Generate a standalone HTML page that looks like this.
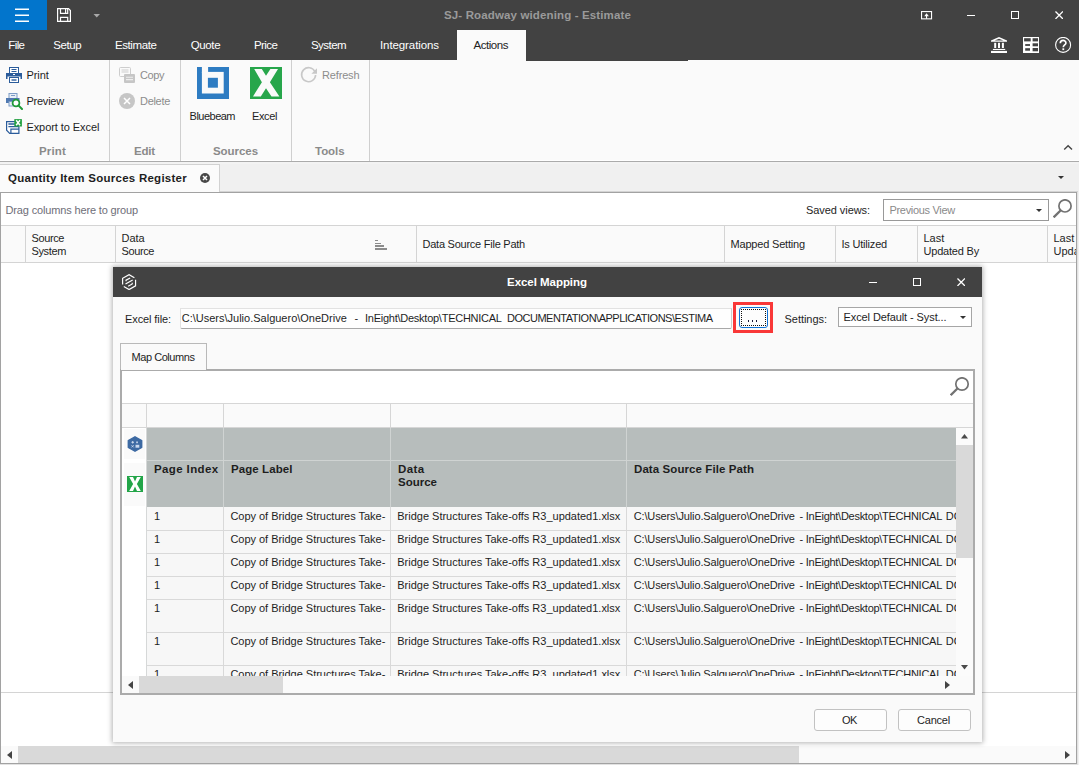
<!DOCTYPE html>
<html><head><meta charset="utf-8"><title>Estimate</title>
<style>
html,body{margin:0;padding:0;}
body{width:1079px;height:765px;overflow:hidden;position:relative;background:#f0f0f0;font-family:"Liberation Sans",sans-serif;}
.b{position:absolute;display:block;}
.t{position:absolute;white-space:pre;line-height:14px;font-family:"Liberation Sans",sans-serif;}
</style></head><body>
<div class="b" style="left:0px;top:0px;width:1079px;height:765px;background:#f0f0f0"></div>
<div class="b" style="left:0px;top:0px;width:1079px;height:60px;background:#424242"></div>
<div class="b" style="left:526px;top:60px;width:162px;height:1px;background:#424242"></div>
<div class="b" style="left:0px;top:0px;width:47px;height:30px;background:#0275cc"></div>
<svg class="b" style="left:15px;top:8px" width="14" height="14" viewBox="0 0 14 14"><path d="M0 1.25h14M0 7.25h14M0 13.25h14" stroke="#fff" stroke-width="1.3" fill="none"/></svg>
<svg class="b" style="left:57px;top:8px" width="14" height="14" viewBox="0 0 14 14"><path d="M0.6 0.6H11.5L13.4 2.5V13.4H0.6Z" stroke="#fff" stroke-width="1.2" fill="none"/><path d="M3.5 0.6V5.4H10.7V0.6M8.6 0.8V5.2M3.5 13.4V9.4H10.7V13.4" stroke="#fff" stroke-width="1.2" fill="none"/></svg>
<svg class="b" style="left:93px;top:14px" width="8" height="4" viewBox="0 0 8 4"><path d="M0.5 0h6.5l-3.25 3.5z" fill="#a8a8a8"/></svg>
<span class="t" style="left:444px;top:8px;font-size:11.5px;font-weight:700;color:#9a9a9a;letter-spacing:0.137px;">SJ- Roadway widening - Estimate</span>
<svg class="b" style="left:921px;top:10.6px" width="12" height="9" viewBox="0 0 12 9"><rect x="0.55" y="0.55" width="10" height="7.3" stroke="#fff" stroke-width="1.1" fill="none"/><path d="M5.55 2.3L7.9 5.2H6.1V7.8H5V5.2H3.2Z" fill="#fff"/></svg>
<div class="b" style="left:967px;top:15px;width:8px;height:1.3px;background:#fff"></div>
<div class="b" style="left:1011px;top:11px;width:8px;height:8px;border:1.3px solid #fff;box-sizing:border-box"></div>
<svg class="b" style="left:1055px;top:11px" width="8.4" height="8.4" viewBox="0 0 9 9"><path d="M0.5 0.5l8 8M8.5 0.5l-8 8" stroke="#fff" stroke-width="1.4"/></svg>
<svg class="b" style="left:991px;top:37px" width="16" height="16" viewBox="0 0 16 16"><path d="M8 0L16 3.6V4.8H0V3.6Z" fill="#fff"/><path d="M8 1.7L12.3 3.6H3.7Z" fill="#424242"/><rect x="3.2" y="5.8" width="2" height="5.2" fill="#fff"/><rect x="7" y="5.8" width="2" height="5.2" fill="#fff"/><rect x="10.9" y="5.8" width="2" height="5.2" fill="#fff"/><rect x="1.9" y="11.9" width="12.3" height="1.1" fill="#fff"/><rect x="0" y="13.9" width="16" height="2.1" fill="#fff"/></svg>
<svg class="b" style="left:1023px;top:37px" width="16" height="16" viewBox="0 0 16 16"><rect width="16" height="16" fill="#fff"/><rect x="1.1" y="1.2" width="6.6" height="3.2" fill="#424242"/><rect x="9.6" y="1.2" width="5.4" height="3.2" fill="#424242"/><rect x="2.2" y="7.1" width="4.8" height="1.8" fill="#424242"/><rect x="9.6" y="6.3" width="5.4" height="3" fill="#424242"/><rect x="2.2" y="11.2" width="4.8" height="2.5" fill="#424242"/><rect x="9.6" y="11" width="5.4" height="3.3" fill="#424242"/></svg>
<svg class="b" style="left:1055px;top:37px" width="17" height="17" viewBox="0 0 17 17"><circle cx="8.1" cy="7.9" r="7.5" fill="none" stroke="#fff" stroke-width="1.1"/><path d="M5.3 6.2c0-3.6 5.6-3.6 5.6-0.3c0 2-2.6 2.1-2.6 4.3" fill="none" stroke="#fff" stroke-width="1.7"/><rect x="7.4" y="11.3" width="1.8" height="1.8" fill="#fff"/></svg>
<div class="b" style="left:457px;top:30px;width:69px;height:31px;background:#fafafa"></div>
<span class="t" style="left:8.25px;top:38px;font-size:11.5px;font-weight:400;color:#fff;letter-spacing:-0.600px;">File</span>
<span class="t" style="left:53.3px;top:38px;font-size:11.5px;font-weight:400;color:#fff;letter-spacing:-0.412px;">Setup</span>
<span class="t" style="left:115px;top:38px;font-size:11.5px;font-weight:400;color:#fff;letter-spacing:-0.419px;">Estimate</span>
<span class="t" style="left:190.7px;top:38px;font-size:11.5px;font-weight:400;color:#fff;letter-spacing:-0.366px;">Quote</span>
<span class="t" style="left:254px;top:38px;font-size:11.5px;font-weight:400;color:#fff;letter-spacing:-0.600px;">Price</span>
<span class="t" style="left:311px;top:38px;font-size:11.5px;font-weight:400;color:#fff;letter-spacing:-0.557px;">System</span>
<span class="t" style="left:380px;top:38px;font-size:11.5px;font-weight:400;color:#fff;letter-spacing:-0.092px;">Integrations</span>
<span class="t" style="left:473.5px;top:38px;font-size:11.5px;font-weight:400;color:#222;letter-spacing:-0.460px;">Actions</span>
<div class="b" style="left:0px;top:61px;width:1079px;height:100px;background:#fafafa"></div>
<div class="b" style="left:0px;top:60px;width:526px;height:1px;background:#fafafa"></div>
<div class="b" style="left:688px;top:60px;width:391px;height:1px;background:#fafafa"></div>
<div class="b" style="left:0px;top:160px;width:1079px;height:1px;background:#fff"></div>
<div class="b" style="left:0px;top:161px;width:1079px;height:1px;background:#ababab"></div>
<div class="b" style="left:0px;top:162px;width:1079px;height:2px;background:#f3f3f3"></div>
<div class="b" style="left:109px;top:60px;width:1px;height:101px;background:#cfcfcf"></div>
<div class="b" style="left:180px;top:60px;width:1px;height:101px;background:#cfcfcf"></div>
<div class="b" style="left:291px;top:60px;width:1px;height:101px;background:#cfcfcf"></div>
<div class="b" style="left:369px;top:60px;width:1px;height:101px;background:#cfcfcf"></div>
<span class="t" style="left:26.4px;top:67.5px;font-size:11px;font-weight:400;color:#1e1e1e;letter-spacing:-0.045px;">Print</span>
<span class="t" style="left:26.4px;top:93.5px;font-size:11px;font-weight:400;color:#1e1e1e;letter-spacing:-0.218px;">Preview</span>
<span class="t" style="left:26.4px;top:119.5px;font-size:11px;font-weight:400;color:#1e1e1e;letter-spacing:-0.066px;">Export to Excel</span>
<span class="t" style="left:140px;top:67.5px;font-size:11px;font-weight:400;color:#8c8c8c;letter-spacing:-0.422px;">Copy</span>
<span class="t" style="left:140px;top:93.5px;font-size:11px;font-weight:400;color:#8c8c8c;letter-spacing:-0.299px;">Delete</span>
<span class="t" style="left:189.6px;top:108.7px;font-size:11px;font-weight:400;color:#1e1e1e;letter-spacing:-0.518px;">Bluebeam</span>
<span class="t" style="left:252px;top:108.7px;font-size:11px;font-weight:400;color:#1e1e1e;letter-spacing:-0.381px;">Excel</span>
<span class="t" style="left:322px;top:67.5px;font-size:11px;font-weight:400;color:#8c8c8c;letter-spacing:-0.162px;">Refresh</span>
<span class="t" style="left:39px;top:143.5px;font-size:11.5px;font-weight:700;color:#8a8a8a;letter-spacing:0.159px;">Print</span>
<span class="t" style="left:134px;top:143.5px;font-size:11.5px;font-weight:700;color:#8a8a8a;letter-spacing:-0.184px;">Edit</span>
<span class="t" style="left:213px;top:143.5px;font-size:11.5px;font-weight:700;color:#8a8a8a;letter-spacing:-0.056px;">Sources</span>
<span class="t" style="left:315px;top:143.5px;font-size:11.5px;font-weight:700;color:#8a8a8a;letter-spacing:-0.042px;">Tools</span>
<svg class="b" style="left:197px;top:67px" width="32" height="32" viewBox="0 0 32 32"><rect width="32" height="32" fill="#2e7cc2"/><rect x="4.9" y="4.9" width="21.8" height="21.6" fill="#fafafa"/><rect x="4.9" y="0" width="6.2" height="6" fill="#fafafa"/><rect x="10.9" y="10.8" width="10" height="9.9" fill="#2e7cc2"/></svg>
<svg class="b" style="left:250px;top:67px" width="32" height="32" viewBox="0 0 32 32"><rect width="32" height="32" fill="#27a64b"/><path d="M4.2 1.9L11.8 1.9L16 8.8L20.4 1.9L28 1.9L19.9 15.2L29.4 29.4L21.5 29.4L16 21.3L10.8 29.4L3 29.4L11.9 15.2Z" fill="#fafafa"/></svg>
<svg class="b" style="left:1063px;top:144px" width="10" height="7" viewBox="0 0 10 7"><path d="M1.2 5.6l3.9-3.9l3.9 3.9" stroke="#444" stroke-width="1.35" fill="none"/></svg>
<div class="b" style="left:0px;top:164px;width:220px;height:29px;background:#fbfbfb;border:1px solid #d2d2d2;border-bottom:none;border-left:none;box-sizing:border-box"></div>
<span class="t" style="left:8px;top:171px;font-size:11.5px;font-weight:700;color:#1e1e1e;letter-spacing:0.257px;">Quantity Item Sources Register</span>
<svg class="b" style="left:200px;top:173px" width="10" height="10" viewBox="0 0 10 10"><circle cx="5" cy="5" r="5" fill="#484848"/><path d="M3 3l4 4M7 3l-4 4" stroke="#fff" stroke-width="1.5"/></svg>
<svg class="b" style="left:1057.7px;top:176px" width="6" height="3" viewBox="0 0 6 3"><path d="M0 0h6l-3 3z" fill="#333"/></svg>
<div class="b" style="left:220px;top:191px;width:858px;height:1px;background:#d4d4d4"></div>
<div class="b" style="left:1077px;top:192px;width:1px;height:573px;background:#e2e2e2"></div>
<div class="b" style="left:0px;top:764px;width:1078px;height:1px;background:#e2e2e2"></div>
<div class="b" style="left:0px;top:192px;width:1077px;height:572px;background:#fff;border:1px solid #a2a2a2;box-sizing:border-box"></div>
<span class="t" style="left:5.5px;top:202.8px;font-size:11px;font-weight:400;color:#6e6e78;letter-spacing:-0.148px;">Drag columns here to group</span>
<span class="t" style="left:806px;top:202.8px;font-size:11px;font-weight:400;color:#1e1e1e;letter-spacing:-0.068px;">Saved views:</span>
<div class="b" style="left:883px;top:199px;width:166px;height:22px;background:#fff;border:1px solid #999;box-sizing:border-box"></div>
<span class="t" style="left:889.5px;top:202.8px;font-size:11px;font-weight:400;color:#8a8a8a;letter-spacing:-0.323px;">Previous View</span>
<svg class="b" style="left:1035.7px;top:208.6px" width="6" height="3" viewBox="0 0 6 3"><path d="M0 0h6l-3 3z" fill="#333"/></svg>
<svg class="b" style="left:1053px;top:199px" width="19" height="19" viewBox="0 0 19 19"><circle cx="12" cy="6.9" r="6.1" fill="none" stroke="#727272" stroke-width="1.7"/><path d="M7.8 11.2l-7.2 7.2" stroke="#727272" stroke-width="2.3"/></svg>
<div class="b" style="left:1px;top:225px;width:1075px;height:38px;background:#fafafa;border-top:1px solid #d4d4d4;border-bottom:1px solid #d4d4d4;box-sizing:border-box"></div>
<div class="b" style="left:25px;top:226px;width:1px;height:36px;background:#d4d4d4"></div>
<div class="b" style="left:115px;top:226px;width:1px;height:36px;background:#d4d4d4"></div>
<div class="b" style="left:416px;top:226px;width:1px;height:36px;background:#d4d4d4"></div>
<div class="b" style="left:724px;top:226px;width:1px;height:36px;background:#d4d4d4"></div>
<div class="b" style="left:835px;top:226px;width:1px;height:36px;background:#d4d4d4"></div>
<div class="b" style="left:917px;top:226px;width:1px;height:36px;background:#d4d4d4"></div>
<div class="b" style="left:1047px;top:226px;width:1px;height:36px;background:#d4d4d4"></div>
<span class="t" style="left:31.5px;top:231px;font-size:11px;font-weight:400;color:#1e1e1e;letter-spacing:-0.393px;">Source</span>
<span class="t" style="left:31.5px;top:244px;font-size:11px;font-weight:400;color:#1e1e1e;letter-spacing:-0.365px;">System</span>
<span class="t" style="left:121.5px;top:231px;font-size:11px;font-weight:400;color:#1e1e1e;">Data</span>
<span class="t" style="left:121.5px;top:244px;font-size:11px;font-weight:400;color:#1e1e1e;letter-spacing:-0.393px;">Source</span>
<div class="b" style="left:375px;top:240px;width:3px;height:1px;background:#8c8c8c"></div>
<div class="b" style="left:375px;top:243px;width:6px;height:1px;background:#8c8c8c"></div>
<div class="b" style="left:375px;top:245px;width:9px;height:1.7px;background:#8c8c8c"></div>
<div class="b" style="left:375px;top:248px;width:12px;height:1.9px;background:#8c8c8c"></div>
<span class="t" style="left:422.5px;top:237px;font-size:11px;font-weight:400;color:#1e1e1e;letter-spacing:-0.244px;">Data Source File Path</span>
<span class="t" style="left:730.5px;top:237px;font-size:11px;font-weight:400;color:#1e1e1e;letter-spacing:-0.183px;">Mapped Setting</span>
<span class="t" style="left:841.5px;top:237px;font-size:11px;font-weight:400;color:#1e1e1e;letter-spacing:-0.199px;">Is Utilized</span>
<span class="t" style="left:923.5px;top:231px;font-size:11px;font-weight:400;color:#1e1e1e;">Last</span>
<span class="t" style="left:923.5px;top:244px;font-size:11px;font-weight:400;color:#1e1e1e;letter-spacing:-0.198px;">Updated By</span>
<div class="b" style="left:1048px;top:227px;width:28px;height:35px;overflow:hidden"><span class="t" style="left:5.5px;top:4px;font-size:11px;font-weight:400;color:#1e1e1e;">Last</span><span class="t" style="left:5.5px;top:17px;font-size:11px;font-weight:400;color:#1e1e1e;">Updated</span></div>
<div class="b" style="left:1px;top:692px;width:1075px;height:1px;background:#d4d4d4"></div>
<div class="b" style="left:1px;top:746px;width:1075px;height:17px;background:#fafafa"></div>
<div class="b" style="left:18px;top:746px;width:781px;height:17px;background:#d9d9d9"></div>
<svg class="b" style="left:7px;top:751px" width="5" height="8" viewBox="0 0 5 8"><path d="M5 0v8l-5-4z" fill="#444"/></svg>
<svg class="b" style="left:1065px;top:751px" width="5" height="8" viewBox="0 0 5 8"><path d="M0 0v8l5-4z" fill="#444"/></svg>
<svg class="b" style="left:6px;top:67px" width="16" height="16" viewBox="0 0 16 16"><rect x="3.5" y="0.5" width="9" height="7" fill="#fff" stroke="#2b5c9b" stroke-width="1"/><path d="M5.5 2.5h5M5.5 4.5h5" stroke="#2b5c9b" stroke-width="1"/><path d="M0 6h16v6h-1.5v-2.5h-13v2.5h-1.5z" fill="#2b5c9b"/><rect x="7" y="7" width="2" height="1" fill="#fff"/><rect x="3.5" y="10.5" width="9" height="5" fill="#fff" stroke="#2b5c9b" stroke-width="1"/><path d="M5.5 13h5" stroke="#2b5c9b" stroke-width="1.4"/></svg>
<svg class="b" style="left:6px;top:93px" width="17" height="17" viewBox="0 0 17 17"><rect x="3" y="0.5" width="8" height="5" fill="#e8eef6" stroke="#7d9cc6" stroke-width="1"/><path d="M5 2.5h4" stroke="#7d9cc6" stroke-width="1"/><path d="M0 5h13.5v5h-13.5z" fill="#4f78b0"/><rect x="3" y="8.5" width="7" height="4.5" fill="#e8eef6" stroke="#7d9cc6" stroke-width="1"/><circle cx="10" cy="10" r="3.4" fill="#fff" stroke="#1f9a38" stroke-width="1.8"/><path d="M12.4 12.4l3.6 3.6" stroke="#1f9a38" stroke-width="2" stroke-linecap="round"/></svg>
<svg class="b" style="left:6px;top:119px" width="17" height="16" viewBox="0 0 17 16"><path d="M0.6 2.6H9V8H12.9V14.4H3.7L0.6 11.2Z" fill="#fff"/><path d="M9 2.6H0.6V11.2L3.7 14.4H12.9V7.5" fill="none" stroke="#2b5c9b" stroke-width="1.2"/><path d="M2.4 5H9M2.4 7.6H12.9" fill="none" stroke="#2b5c9b" stroke-width="1.3"/><path d="M4.9 14.4V10.2H12.9" fill="none" stroke="#2b5c9b" stroke-width="1.2"/><rect x="8.3" y="0.1" width="7.6" height="7.4" fill="#22a040"/><path d="M10.2 1.3l3.8 5M14 1.3l-3.8 5" stroke="#fff" stroke-width="1.5"/></svg>
<svg class="b" style="left:119px;top:67px" width="17" height="17" viewBox="0 0 17 17"><rect x="0.5" y="0.5" width="11" height="9" rx="1" fill="#fafafa" stroke="#cdcdcd" stroke-width="1"/><path d="M2.5 3h7M2.5 5h7" stroke="#cdcdcd" stroke-width="1"/><rect x="5" y="7" width="11" height="9" rx="1" fill="#c6c6c6"/><path d="M7 10.2h7M7 12.6h7" stroke="#eee" stroke-width="1.1"/></svg>
<svg class="b" style="left:119px;top:93px" width="16" height="16" viewBox="0 0 16 16"><circle cx="8" cy="8" r="8" fill="#c6c6c6"/><path d="M5 5l6 6M11 5l-6 6" stroke="#fff" stroke-width="1.5"/></svg>
<svg class="b" style="left:300px;top:66px" width="18" height="18" viewBox="0 0 18 18"><path d="M14.9 5.6A7 7 0 1 0 15.6 9" fill="none" stroke="#c8c8c8" stroke-width="1.6"/><path d="M17 2.2v5.6h-5.6z" fill="#c8c8c8"/></svg>
<div class="b" style="left:113px;top:267px;width:869px;height:475px;background:#fafafa;box-shadow:0 0 5px 1px rgba(0,0,0,0.3)"></div>
<div class="b" style="left:113px;top:267px;width:869px;height:30px;background:#424242"></div>
<span class="t" style="left:507px;top:274.8px;font-size:11.5px;font-weight:700;color:#fff;letter-spacing:-0.041px;">Excel Mapping</span>
<svg class="b" style="left:120.9px;top:273.8px" width="16.2" height="16.2" viewBox="0 0 18 18"><path d="M1.8 11.6V4.85L9 0.7L14.9 4.1M16.2 6.4V13.15L9 17.3L3.1 13.9" fill="none" stroke="#fff" stroke-width="1.3"/><path d="M10.2 4.4L5.6 6.9V8.2M5 11.2L13 6.6M12.5 9.8V11.1L8 13.6" fill="none" stroke="#fff" stroke-width="1.3"/></svg>
<div class="b" style="left:869px;top:281.5px;width:8px;height:1.3px;background:#fff"></div>
<div class="b" style="left:913px;top:278px;width:8px;height:8px;border:1.3px solid #fff;box-sizing:border-box"></div>
<svg class="b" style="left:957px;top:278px" width="8.4" height="8.4" viewBox="0 0 9 9"><path d="M0.5 0.5l8 8M8.5 0.5l-8 8" stroke="#fff" stroke-width="1.4"/></svg>
<span class="t" style="left:125px;top:311.7px;font-size:11px;font-weight:400;color:#1e1e1e;letter-spacing:-0.098px;">Excel file:</span>
<div class="b" style="left:180px;top:308px;width:552px;height:21px;background:#fefefe;border-top:1px solid #e2e2e2;border-bottom:1px solid #a8a8a8;border-left:1px solid #e2e2e2;border-right:1px solid #cfcfcf;box-sizing:border-box;border-radius:0 0 2px 2px"></div>
<span class="t" style="left:181.75px;top:311px;font-size:11px;font-weight:400;color:#1e1e1e;letter-spacing:-0.002px;">C:\Users\Julio.Salguero\OneDrive</span>
<span class="t" style="left:354.5px;top:311px;font-size:11px;font-weight:400;color:#1e1e1e;letter-spacing:-0.172px;">-</span>
<span class="t" style="left:365px;top:311px;font-size:11px;font-weight:400;color:#1e1e1e;letter-spacing:-0.253px;">InEight\Desktop\TECHNICAL</span>
<span class="t" style="left:507px;top:311px;font-size:11px;font-weight:400;color:#1e1e1e;letter-spacing:-0.496px;">DOCUMENTATION\APPLICATIONS\ESTIMA</span>
<div class="b" style="left:733px;top:302px;width:40px;height:31px;border:3px solid #f93737;box-sizing:border-box"></div>
<div class="b" style="left:739px;top:307px;width:29px;height:21px;border:1px solid #0f72d6;box-sizing:border-box;border-radius:3px;background:#fdfdfd"></div>
<div class="b" style="left:741px;top:309px;width:25px;height:17px;border:1px dotted #111;box-sizing:border-box"></div>
<div class="b" style="left:747.6px;top:320px;width:1.3px;height:2px;background:#1a1a3a"></div>
<div class="b" style="left:751.6px;top:320px;width:1.3px;height:2px;background:#1a1a3a"></div>
<div class="b" style="left:755.6px;top:320px;width:1.3px;height:2px;background:#1a1a3a"></div>
<span class="t" style="left:784.5px;top:311.7px;font-size:11px;font-weight:400;color:#1e1e1e;letter-spacing:-0.035px;">Settings:</span>
<div class="b" style="left:838px;top:307px;width:134px;height:20px;background:#fff;border:1px solid #a6a6a6;box-sizing:border-box"></div>
<span class="t" style="left:843.5px;top:309.5px;font-size:11px;font-weight:400;color:#1e1e1e;letter-spacing:-0.094px;">Excel Default - Syst...</span>
<svg class="b" style="left:959.5px;top:316px" width="6" height="3" viewBox="0 0 6 3"><path d="M0 0h6l-3 3z" fill="#333"/></svg>
<div class="b" style="left:120px;top:343px;width:87px;height:28px;background:#fafafa;border:1px solid #b9b9b9;border-bottom:none;box-sizing:border-box"></div>
<span class="t" style="left:131.5px;top:349.5px;font-size:11px;font-weight:400;color:#1e1e1e;letter-spacing:-0.442px;">Map Columns</span>
<div class="b" style="left:120px;top:369px;width:855px;height:326px;background:#fff;border:2px solid #ababab;box-sizing:border-box"></div>
<div class="b" style="left:121px;top:369px;width:85px;height:1px;background:#fafafa"></div>
<svg class="b" style="left:950px;top:377px" width="20" height="20" viewBox="0 0 20 20"><circle cx="12" cy="7" r="6.2" fill="none" stroke="#727272" stroke-width="1.7"/><path d="M7.7 11.3l-7 7" stroke="#727272" stroke-width="2.3"/></svg>
<div class="b" style="left:122px;top:403px;width:851px;height:25px;background:#fafafa;border-top:1px solid #d6d6d6;border-bottom:1px solid #d6d6d6;box-sizing:border-box"></div>
<div class="b" style="left:146px;top:404px;width:1px;height:23px;background:#d6d6d6"></div>
<div class="b" style="left:223px;top:404px;width:1px;height:23px;background:#d6d6d6"></div>
<div class="b" style="left:390px;top:404px;width:1px;height:23px;background:#d6d6d6"></div>
<div class="b" style="left:626px;top:404px;width:1px;height:23px;background:#d6d6d6"></div>
<div class="b" style="left:124px;top:429px;width:21px;height:30px;background:#fafafa"></div>
<div class="b" style="left:124px;top:463px;width:21px;height:43px;background:#fafafa"></div>
<div class="b" style="left:146px;top:428px;width:1px;height:248px;background:#d6d8d8"></div>
<div class="b" style="left:147px;top:428px;width:809px;height:32px;background:#b7bdbc"></div>
<div class="b" style="left:147px;top:460px;width:809px;height:47px;background:#b7bdbc"></div>
<div class="b" style="left:147px;top:460px;width:809px;height:1px;background:#cfd3d2"></div>
<div class="b" style="left:223px;top:428px;width:1px;height:79px;background:#cfd3d2"></div>
<div class="b" style="left:390px;top:428px;width:1px;height:79px;background:#cfd3d2"></div>
<div class="b" style="left:626px;top:428px;width:1px;height:79px;background:#cfd3d2"></div>
<span class="t" style="left:154px;top:461.5px;font-size:11.5px;font-weight:700;color:#1e1e1e;letter-spacing:0.378px;">Page Index</span>
<span class="t" style="left:231px;top:461.5px;font-size:11.5px;font-weight:700;color:#1e1e1e;letter-spacing:0.078px;">Page Label</span>
<span class="t" style="left:398px;top:461.5px;font-size:11.5px;font-weight:700;color:#1e1e1e;letter-spacing:0.391px;">Data</span>
<span class="t" style="left:398px;top:474.5px;font-size:11.5px;font-weight:700;color:#1e1e1e;letter-spacing:0.000px;">Source</span>
<span class="t" style="left:634px;top:461.5px;font-size:11.5px;font-weight:700;color:#1e1e1e;letter-spacing:0.084px;">Data Source File Path</span>
<svg class="b" style="left:127px;top:436px" width="16" height="16" viewBox="0 0 16 16"><path d="M8 0.8L14.7 4.6V11.4L8 15.2L1.3 11.4V4.6Z" fill="#3d6aa3" stroke="#3d6aa3" stroke-width="1.4" stroke-linejoin="round"/><path d="M4.4 6.3h2.6M5.7 5v2.6" stroke="#d5e0f0" stroke-width="0.9"/><rect x="9.2" y="5.5" width="1.7" height="1.7" fill="#c4d3ea"/><path d="M4.5 9.2l2.2 2.2M6.7 9.2l-2.2 2.2" stroke="#d5e0f0" stroke-width="0.8"/><rect x="8.5" y="8.8" width="3.8" height="2.9" fill="#c8d8ee"/></svg>
<svg class="b" style="left:127px;top:476px" width="16" height="16" viewBox="0 0 16 16"><rect width="16" height="16" fill="#22a548"/><path d="M2.2 1h3.8l2 4.4l2-4.4h3.8l-3.9 7l3.9 7h-3.8l-2-4.4l-2 4.4h-3.8l3.9-7z" fill="#fff"/></svg>
<div class="b" style="left:147px;top:507px;width:809px;height:169px;overflow:hidden;background:#f7f7f7">
<span class="t" style="left:7px;top:1.9px;font-size:11px;font-weight:400;color:#1e1e1e;">1</span>
<span class="t" style="left:83.4px;top:1.9px;font-size:11px;font-weight:400;color:#1e1e1e;letter-spacing:-0.026px;">Copy of Bridge Structures Take-</span>
<span class="t" style="left:250.3px;top:1.9px;font-size:11px;font-weight:400;color:#1e1e1e;letter-spacing:-0.009px;">Bridge Structures Take-offs R3_updated1.xlsx</span>
<span class="t" style="left:486.7px;top:1.9px;font-size:11px;font-weight:400;color:#1e1e1e;letter-spacing:-0.124px;">C:\Users\Julio.Salguero\OneDrive</span>
<span class="t" style="left:652.5px;top:1.9px;font-size:11px;font-weight:400;color:#1e1e1e;letter-spacing:-0.172px;">-</span>
<span class="t" style="left:658.8px;top:1.9px;font-size:11px;font-weight:400;color:#1e1e1e;letter-spacing:-0.275px;">InEight\Desktop\TECHNICAL</span>
<span class="t" style="left:798.8px;top:1.9px;font-size:11px;font-weight:400;color:#1e1e1e;">DOCUMENTATION</span>
<div class="b" style="left:0px;top:23px;width:809px;height:1px;background:#d9d9d9"></div>
<span class="t" style="left:7px;top:24.9px;font-size:11px;font-weight:400;color:#1e1e1e;">1</span>
<span class="t" style="left:83.4px;top:24.9px;font-size:11px;font-weight:400;color:#1e1e1e;letter-spacing:-0.026px;">Copy of Bridge Structures Take-</span>
<span class="t" style="left:250.3px;top:24.9px;font-size:11px;font-weight:400;color:#1e1e1e;letter-spacing:-0.009px;">Bridge Structures Take-offs R3_updated1.xlsx</span>
<span class="t" style="left:486.7px;top:24.9px;font-size:11px;font-weight:400;color:#1e1e1e;letter-spacing:-0.124px;">C:\Users\Julio.Salguero\OneDrive</span>
<span class="t" style="left:652.5px;top:24.9px;font-size:11px;font-weight:400;color:#1e1e1e;letter-spacing:-0.172px;">-</span>
<span class="t" style="left:658.8px;top:24.9px;font-size:11px;font-weight:400;color:#1e1e1e;letter-spacing:-0.275px;">InEight\Desktop\TECHNICAL</span>
<span class="t" style="left:798.8px;top:24.9px;font-size:11px;font-weight:400;color:#1e1e1e;">DOCUMENTATION</span>
<div class="b" style="left:0px;top:46px;width:809px;height:1px;background:#d9d9d9"></div>
<span class="t" style="left:7px;top:47.9px;font-size:11px;font-weight:400;color:#1e1e1e;">1</span>
<span class="t" style="left:83.4px;top:47.9px;font-size:11px;font-weight:400;color:#1e1e1e;letter-spacing:-0.026px;">Copy of Bridge Structures Take-</span>
<span class="t" style="left:250.3px;top:47.9px;font-size:11px;font-weight:400;color:#1e1e1e;letter-spacing:-0.009px;">Bridge Structures Take-offs R3_updated1.xlsx</span>
<span class="t" style="left:486.7px;top:47.9px;font-size:11px;font-weight:400;color:#1e1e1e;letter-spacing:-0.124px;">C:\Users\Julio.Salguero\OneDrive</span>
<span class="t" style="left:652.5px;top:47.9px;font-size:11px;font-weight:400;color:#1e1e1e;letter-spacing:-0.172px;">-</span>
<span class="t" style="left:658.8px;top:47.9px;font-size:11px;font-weight:400;color:#1e1e1e;letter-spacing:-0.275px;">InEight\Desktop\TECHNICAL</span>
<span class="t" style="left:798.8px;top:47.9px;font-size:11px;font-weight:400;color:#1e1e1e;">DOCUMENTATION</span>
<div class="b" style="left:0px;top:69px;width:809px;height:1px;background:#d9d9d9"></div>
<span class="t" style="left:7px;top:70.9px;font-size:11px;font-weight:400;color:#1e1e1e;">1</span>
<span class="t" style="left:83.4px;top:70.9px;font-size:11px;font-weight:400;color:#1e1e1e;letter-spacing:-0.026px;">Copy of Bridge Structures Take-</span>
<span class="t" style="left:250.3px;top:70.9px;font-size:11px;font-weight:400;color:#1e1e1e;letter-spacing:-0.009px;">Bridge Structures Take-offs R3_updated1.xlsx</span>
<span class="t" style="left:486.7px;top:70.9px;font-size:11px;font-weight:400;color:#1e1e1e;letter-spacing:-0.124px;">C:\Users\Julio.Salguero\OneDrive</span>
<span class="t" style="left:652.5px;top:70.9px;font-size:11px;font-weight:400;color:#1e1e1e;letter-spacing:-0.172px;">-</span>
<span class="t" style="left:658.8px;top:70.9px;font-size:11px;font-weight:400;color:#1e1e1e;letter-spacing:-0.275px;">InEight\Desktop\TECHNICAL</span>
<span class="t" style="left:798.8px;top:70.9px;font-size:11px;font-weight:400;color:#1e1e1e;">DOCUMENTATION</span>
<div class="b" style="left:0px;top:92px;width:809px;height:1px;background:#d9d9d9"></div>
<span class="t" style="left:7px;top:93.9px;font-size:11px;font-weight:400;color:#1e1e1e;">1</span>
<span class="t" style="left:83.4px;top:93.9px;font-size:11px;font-weight:400;color:#1e1e1e;letter-spacing:-0.026px;">Copy of Bridge Structures Take-</span>
<span class="t" style="left:250.3px;top:93.9px;font-size:11px;font-weight:400;color:#1e1e1e;letter-spacing:-0.009px;">Bridge Structures Take-offs R3_updated1.xlsx</span>
<span class="t" style="left:486.7px;top:93.9px;font-size:11px;font-weight:400;color:#1e1e1e;letter-spacing:-0.124px;">C:\Users\Julio.Salguero\OneDrive</span>
<span class="t" style="left:652.5px;top:93.9px;font-size:11px;font-weight:400;color:#1e1e1e;letter-spacing:-0.172px;">-</span>
<span class="t" style="left:658.8px;top:93.9px;font-size:11px;font-weight:400;color:#1e1e1e;letter-spacing:-0.275px;">InEight\Desktop\TECHNICAL</span>
<span class="t" style="left:798.8px;top:93.9px;font-size:11px;font-weight:400;color:#1e1e1e;">DOCUMENTATION</span>
<div class="b" style="left:0px;top:125px;width:809px;height:1px;background:#d9d9d9"></div>
<span class="t" style="left:7px;top:126.9px;font-size:11px;font-weight:400;color:#1e1e1e;">1</span>
<span class="t" style="left:83.4px;top:126.9px;font-size:11px;font-weight:400;color:#1e1e1e;letter-spacing:-0.026px;">Copy of Bridge Structures Take-</span>
<span class="t" style="left:250.3px;top:126.9px;font-size:11px;font-weight:400;color:#1e1e1e;letter-spacing:-0.009px;">Bridge Structures Take-offs R3_updated1.xlsx</span>
<span class="t" style="left:486.7px;top:126.9px;font-size:11px;font-weight:400;color:#1e1e1e;letter-spacing:-0.124px;">C:\Users\Julio.Salguero\OneDrive</span>
<span class="t" style="left:652.5px;top:126.9px;font-size:11px;font-weight:400;color:#1e1e1e;letter-spacing:-0.172px;">-</span>
<span class="t" style="left:658.8px;top:126.9px;font-size:11px;font-weight:400;color:#1e1e1e;letter-spacing:-0.275px;">InEight\Desktop\TECHNICAL</span>
<span class="t" style="left:798.8px;top:126.9px;font-size:11px;font-weight:400;color:#1e1e1e;">DOCUMENTATION</span>
<div class="b" style="left:0px;top:158px;width:809px;height:1px;background:#d9d9d9"></div>
<span class="t" style="left:7px;top:159.9px;font-size:11px;font-weight:400;color:#1e1e1e;">1</span>
<span class="t" style="left:83.4px;top:159.9px;font-size:11px;font-weight:400;color:#1e1e1e;letter-spacing:-0.026px;">Copy of Bridge Structures Take-</span>
<span class="t" style="left:250.3px;top:159.9px;font-size:11px;font-weight:400;color:#1e1e1e;letter-spacing:-0.009px;">Bridge Structures Take-offs R3_updated1.xlsx</span>
<span class="t" style="left:486.7px;top:159.9px;font-size:11px;font-weight:400;color:#1e1e1e;letter-spacing:-0.124px;">C:\Users\Julio.Salguero\OneDrive</span>
<span class="t" style="left:652.5px;top:159.9px;font-size:11px;font-weight:400;color:#1e1e1e;letter-spacing:-0.172px;">-</span>
<span class="t" style="left:658.8px;top:159.9px;font-size:11px;font-weight:400;color:#1e1e1e;letter-spacing:-0.275px;">InEight\Desktop\TECHNICAL</span>
<span class="t" style="left:798.8px;top:159.9px;font-size:11px;font-weight:400;color:#1e1e1e;">DOCUMENTATION</span>
<div class="b" style="left:76px;top:0px;width:1px;height:169px;background:#d9d9d9"></div>
<div class="b" style="left:243px;top:0px;width:1px;height:169px;background:#d9d9d9"></div>
<div class="b" style="left:479px;top:0px;width:1px;height:169px;background:#d9d9d9"></div>
</div>
<div class="b" style="left:956px;top:428px;width:17px;height:248px;background:#fbfbfb"></div>
<div class="b" style="left:956px;top:445px;width:17px;height:113px;background:#d9d9d9"></div>
<svg class="b" style="left:960.5px;top:434.2px" width="7" height="4.5" viewBox="0 0 7 4.5"><path d="M0 4.5h7l-3.5-4.5z" fill="#4a4a4a"/></svg>
<svg class="b" style="left:961px;top:665.2px" width="7" height="4.5" viewBox="0 0 7 4.5"><path d="M0 0h7l-3.5 4.5z" fill="#4a4a4a"/></svg>
<div class="b" style="left:122px;top:676px;width:851px;height:17px;background:#fafafa"></div>
<div class="b" style="left:139px;top:676px;width:144px;height:17px;background:#d9d9d9"></div>
<svg class="b" style="left:128px;top:681px" width="5" height="8" viewBox="0 0 5 8"><path d="M5 0v8l-5-4z" fill="#444"/></svg>
<svg class="b" style="left:945px;top:681px" width="5" height="8" viewBox="0 0 5 8"><path d="M0 0v8l5-4z" fill="#444"/></svg>
<div class="b" style="left:814px;top:709px;width:73px;height:22px;background:#fdfdfd;border:1px solid #c2c2c2;box-sizing:border-box;border-radius:3px"></div>
<span class="t" style="left:842px;top:713px;font-size:11px;font-weight:400;color:#1e1e1e;letter-spacing:-0.453px;">OK</span>
<div class="b" style="left:898px;top:709px;width:73px;height:22px;background:#fdfdfd;border:1px solid #c2c2c2;box-sizing:border-box;border-radius:3px"></div>
<span class="t" style="left:917px;top:713px;font-size:11px;font-weight:400;color:#1e1e1e;letter-spacing:-0.208px;">Cancel</span>
</body></html>
